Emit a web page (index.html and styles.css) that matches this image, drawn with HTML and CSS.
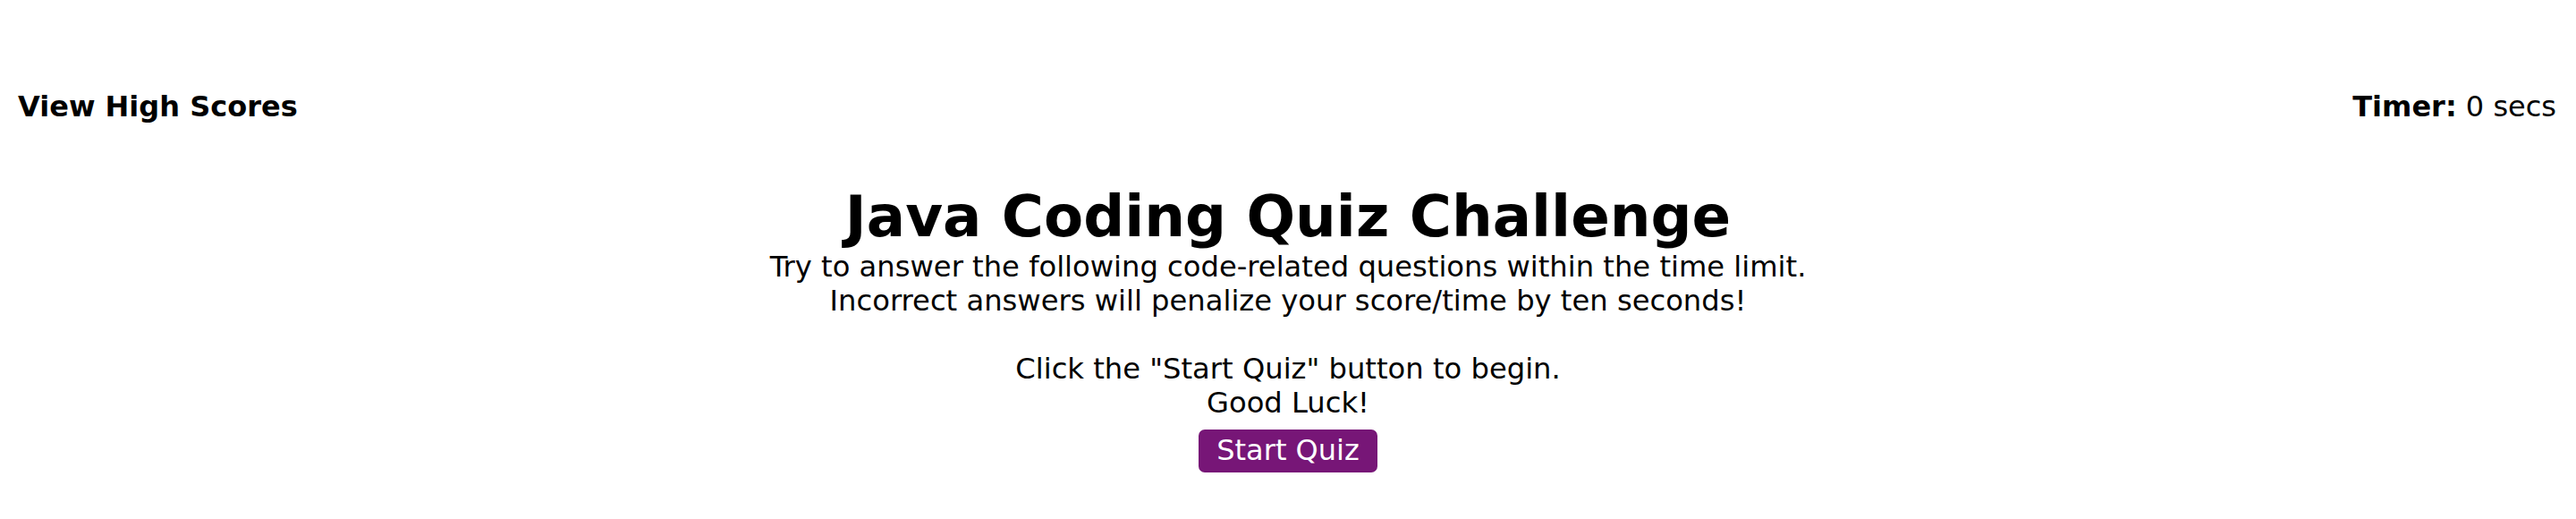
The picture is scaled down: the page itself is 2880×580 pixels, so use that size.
FILE: index.html
```html
<!DOCTYPE html>
<html lang="en">
<head>
<meta charset="utf-8">
<title>Java Coding Quiz Challenge</title>
<link rel="stylesheet" href="styles.css">
</head>
<body>
<header class="topbar">
  <a class="high-scores" href="#">View High Scores</a>
  <div class="timer"><strong>Timer:</strong> <span class="time-left">0</span> secs</div>
</header>
<main class="intro">
  <h1 class="title">Java Coding Quiz Challenge</h1>
  <p class="desc">Try to answer the following code-related questions within the time limit.<br>Incorrect answers will penalize your score/time by ten seconds!<br><br>Click the "Start Quiz" button to begin.<br>Good Luck!</p>
  <button class="start-btn" type="button">Start Quiz</button>
</main>
</body>
</html>
```
FILE: styles.css
```css
html, body {
  margin: 0;
  padding: 0;
  background: #ffffff;
}
body {
  font-family: "DejaVu Sans", Verdana, sans-serif;
  color: #000000;
  font-size: 32px;
}
.topbar {
  display: flex;
  justify-content: space-between;
  align-items: baseline;
  padding: 100px 22px 0 20px;
}
.high-scores {
  font-weight: bold;
  color: #000000;
  text-decoration: none;
}
.intro {
  display: flex;
  flex-direction: column;
  align-items: center;
  text-align: center;
  padding-top: 66px;
}
.title {
  margin: 0;
  font-size: 64.3px;
  font-weight: bold;
}
.desc {
  margin: 0;
  font-size: 32.2px;
}
.start-btn {
  margin-top: 11px;
  font-family: "DejaVu Sans", Verdana, sans-serif;
  font-size: 32px;
  color: #ffffff;
  background: #771677;
  border: none;
  border-radius: 7px;
  padding: 4px 20px 6px;
  cursor: pointer;
}
```
